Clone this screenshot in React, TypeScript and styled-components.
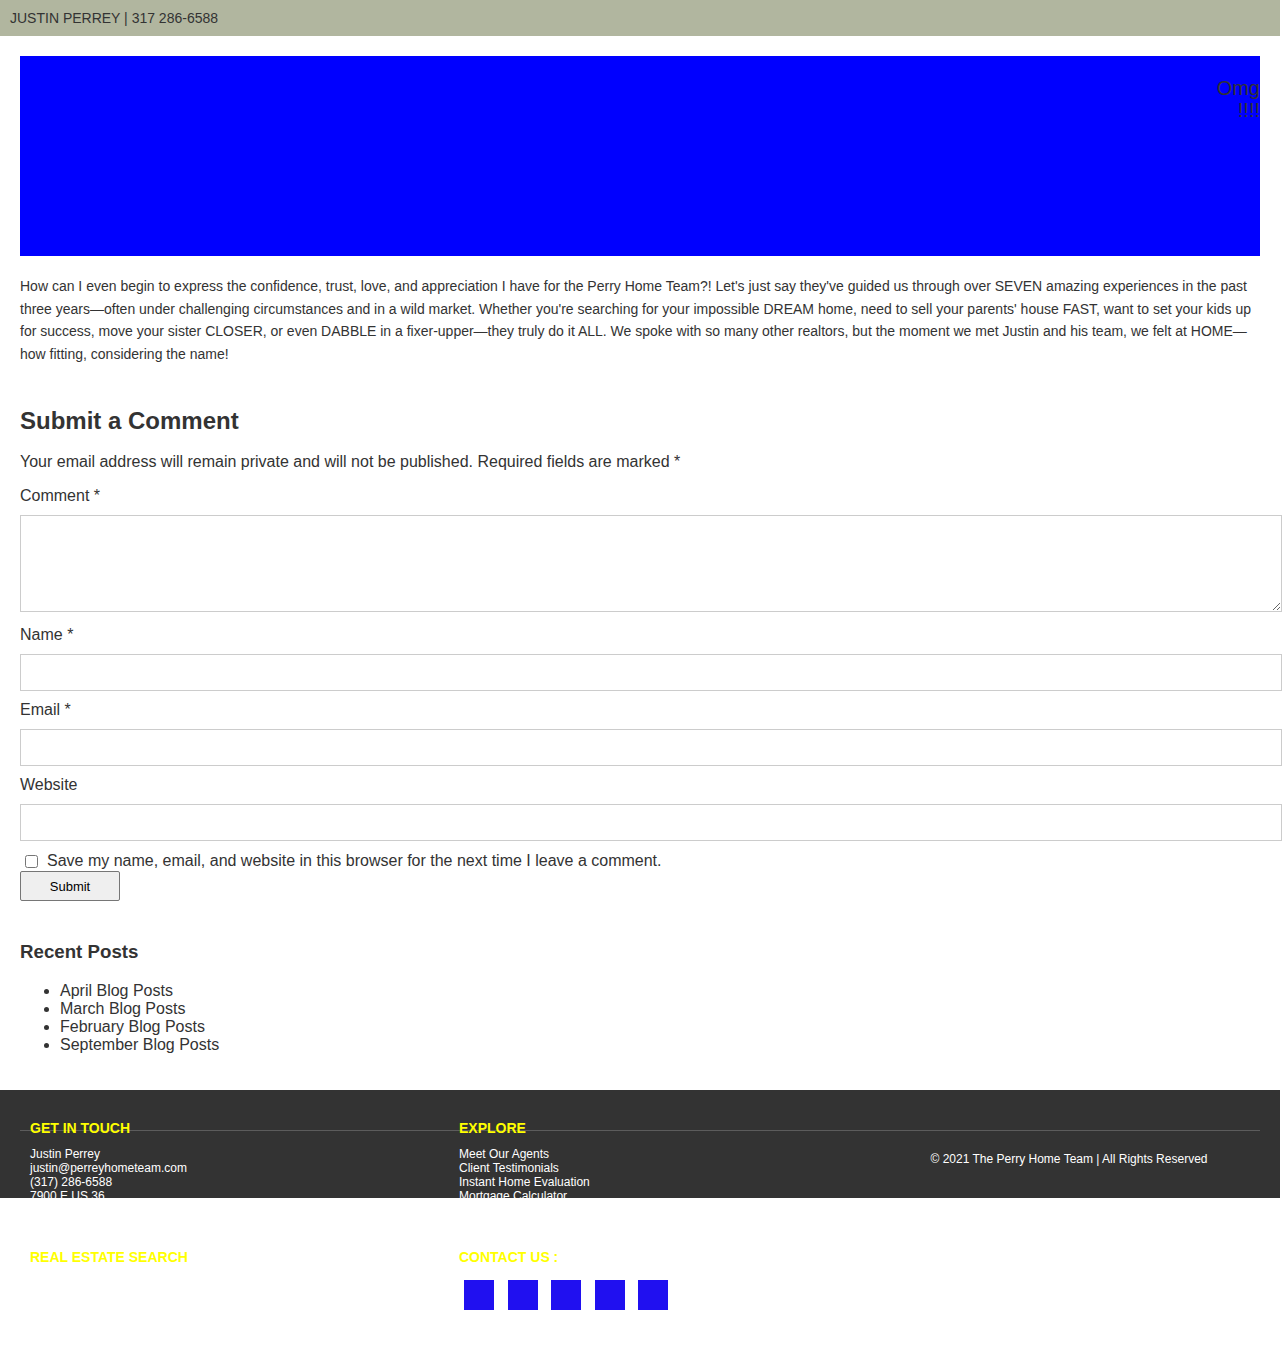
import React from "react";
import styled, { createGlobalStyle } from "styled-components";

const GlobalStyle = createGlobalStyle`
  html, body { margin: 0; padding: 0; background: #fff; }
  body { font-family: "Liberation Sans", Arial, Helvetica, sans-serif; color: #333; }
`;

const Page = styled.div`
  width: 1280px;
  padding-bottom: 30px;
`;

const TopBar = styled.header`
  height: 36px;
  background: #b1b69f;
  display: flex;
  align-items: center;
  padding: 0 10px;
  font-size: 14px;
  color: #333;
`;

const Main = styled.main`
  padding: 20px 20px 20px;
`;

const Banner = styled.div`
  height: 200px;
  background: #0000ff;
  display: flex;
  justify-content: flex-end;
  align-items: flex-start;
`;

const BannerText = styled.div`
  margin-top: 21px;
  font-size: 20px;
  line-height: 22px;
  color: #333;
  text-align: right;
  width: 60px;
`;

const Intro = styled.p`
  margin: 19px 0 0;
  font-size: 14px;
  line-height: 22.5px;
  color: #333;
`;

const CommentTitle = styled.h3`
  margin: 41px 0 0;
  font-size: 24px;
  line-height: 29px;
  font-weight: 700;
  color: #333;
`;

const Note = styled.p`
  margin: 18px 0 0;
  font-size: 16px;
  line-height: 18px;
`;

const Form = styled.form`
  display: flex;
  flex-direction: column;
  align-items: flex-start;
`;

const Label = styled.label<{ $first?: boolean }>`
  display: block;
  margin: ${(p) => (p.$first ? "16px" : "10px")} 0 10px;
  font-size: 16px;
  line-height: 18px;
`;

const TextArea = styled.textarea`
  display: block;
  box-sizing: content-box;
  width: 100%;
  height: 75px;
  padding: 10px;
  margin: 0 0 4px;
  border: 1px solid #ccc;
  font: inherit;
  background: #fff;
`;

const TextInput = styled.input`
  display: block;
  box-sizing: content-box;
  width: 100%;
  height: 15px;
  padding: 10px;
  margin: 0;
  border: 1px solid #ccc;
  font: inherit;
  background: #fff;
`;

const CheckRow = styled.div`
  display: flex;
  align-items: center;
  margin-top: 11px;
  font-size: 16px;
  line-height: 18px;
`;

const Check = styled.input`
  width: 13px;
  height: 13px;
  margin: 0 9px 0 5px;
`;

const SubmitButton = styled.button`
  width: 100px;
  height: 30px;
  margin-top: 1px;
  background: #efefef;
  border: 1px solid #767676;
  border-radius: 2px;
  font-family: "Liberation Sans", Arial, sans-serif;
  font-size: 13px;
  color: #000;
`;

const SideTitle = styled.h4`
  margin: 40px 0 0;
  font-size: 18.7px;
  line-height: 22px;
  font-weight: 700;
`;

const PostList = styled.ul`
  margin: 19px 0 0;
  padding-left: 40px;
  font-size: 16px;
  line-height: 18px;
`;

const FooterTop = styled.footer`
  position: relative;
  margin-top: 16px;
  height: 108px;
  overflow: hidden;
  background: #333;
  box-sizing: border-box;
  padding: 31px 0 0 30px;
`;

const Rule = styled.div`
  position: absolute;
  top: 40px;
  left: 20px;
  right: 20px;
  height: 1px;
  background: #5c5c5c;
`;

const FooterGrid = styled.div`
  position: relative;
  display: grid;
  grid-template-columns: 429px 429px 1fr;
`;

const FooterHeading = styled.h5`
  margin: 0;
  font-size: 14px;
  line-height: 15px;
  font-weight: 700;
  color: #ffff00;
  text-transform: uppercase;
`;

const FooterLines = styled.div`
  margin-top: 11px;
  font-size: 12px;
  line-height: 14px;
  color: #fff;
`;

const Copyright = styled.div`
  margin-top: 31px;
  font-size: 12px;
  line-height: 14px;
  color: #fff;
  text-align: center;
  padding-right: 30px;
`;

const FooterBottom = styled.div`
  display: grid;
  grid-template-columns: 429px 429px 1fr;
  padding: 52px 0 0 30px;
`;

const Socials = styled.div`
  display: flex;
  gap: 13.5px;
  margin: 15px 0 0 5px;
`;

const SocialSquare = styled.span`
  display: block;
  width: 30px;
  height: 30px;
  background: #2010f0;
`;

const posts = ["April Blog Posts", "March Blog Posts", "February Blog Posts", "September Blog Posts"];

export default function App() {
  return (
    <Page>
      <GlobalStyle />
      <TopBar>JUSTIN PERREY | 317 286-6588</TopBar>
      <Main>
        <Banner>
          <BannerText>Omg !!!!</BannerText>
        </Banner>
        <Intro>
          How can I even begin to express the confidence, trust, love, and appreciation I have for the Perry Home Team?! Let's just say they've guided us through over SEVEN amazing experiences in the past three years—often under challenging circumstances and in a wild market. Whether you're searching for your impossible DREAM home, need to sell your parents' house FAST, want to set your kids up for success, move your sister CLOSER, or even DABBLE in a fixer-upper—they truly do it ALL. We spoke with so many other realtors, but the moment we met Justin and his team, we felt at HOME—how fitting, considering the name!
        </Intro>
        <CommentTitle>Submit a Comment</CommentTitle>
        <Note>Your email address will remain private and will not be published. Required fields are marked *</Note>
        <Form onSubmit={(e) => e.preventDefault()}>
          <Label $first htmlFor="comment">Comment *</Label>
          <TextArea id="comment" />
          <Label htmlFor="name">Name *</Label>
          <TextInput id="name" type="text" />
          <Label htmlFor="email">Email *</Label>
          <TextInput id="email" type="text" />
          <Label htmlFor="website">Website</Label>
          <TextInput id="website" type="text" />
          <CheckRow>
            <Check type="checkbox" id="save" />
            <label htmlFor="save">Save my name, email, and website in this browser for the next time I leave a comment.</label>
          </CheckRow>
          <SubmitButton type="submit">Submit</SubmitButton>
        </Form>
        <SideTitle>Recent Posts</SideTitle>
        <PostList>
          {posts.map((p) => (
            <li key={p}>{p}</li>
          ))}
        </PostList>
      </Main>
      <FooterTop>
        <Rule />
        <FooterGrid>
          <div>
            <FooterHeading>Get in touch</FooterHeading>
            <FooterLines>
              Justin Perrey
              <br />
              justin@perreyhometeam.com
              <br />
              (317) 286-6588
              <br />
              7900 E US 36
            </FooterLines>
          </div>
          <div>
            <FooterHeading>Explore</FooterHeading>
            <FooterLines>
              Meet Our Agents
              <br />
              Client Testimonials
              <br />
              Instant Home Evaluation
              <br />
              Mortgage Calculator
            </FooterLines>
          </div>
          <Copyright>© 2021 The Perry Home Team | All Rights Reserved</Copyright>
        </FooterGrid>
      </FooterTop>
      <FooterBottom>
        <div>
          <FooterHeading>Real Estate Search</FooterHeading>
        </div>
        <div>
          <FooterHeading>Contact us :</FooterHeading>
          <Socials>
            <SocialSquare />
            <SocialSquare />
            <SocialSquare />
            <SocialSquare />
            <SocialSquare />
          </Socials>
        </div>
        <div />
      </FooterBottom>
    </Page>
  );
}
